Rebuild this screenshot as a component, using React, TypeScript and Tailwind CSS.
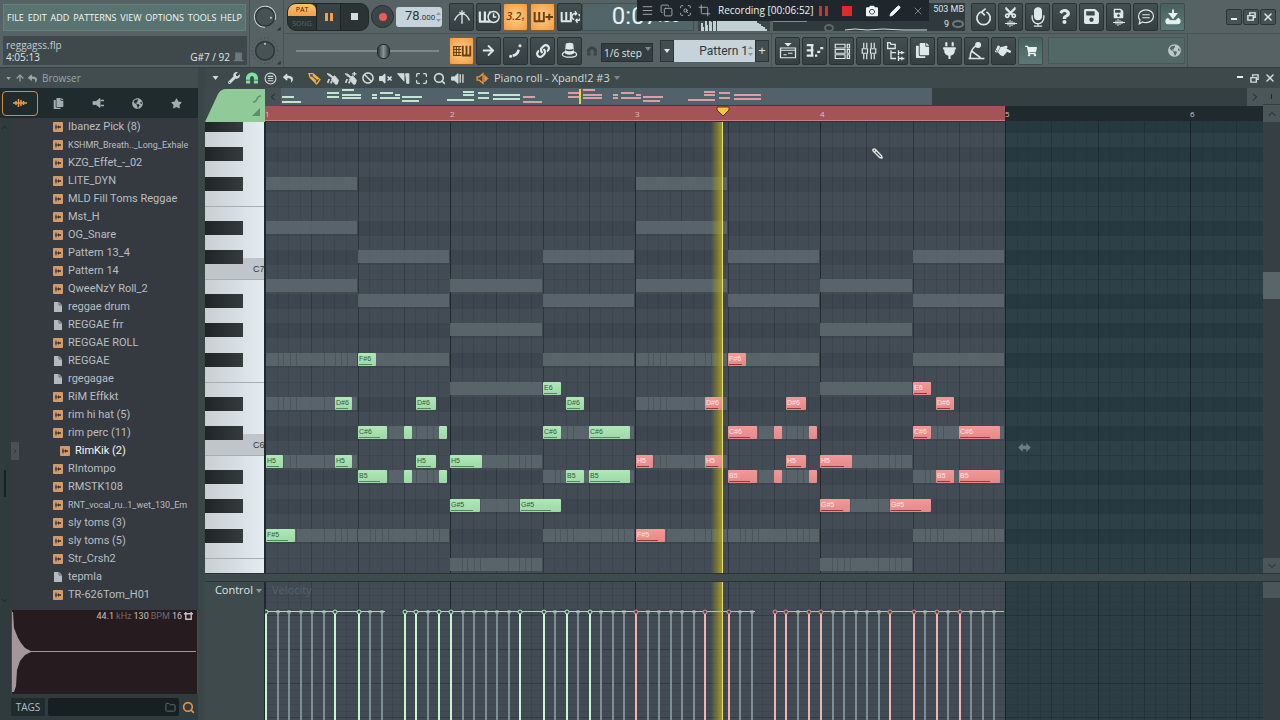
import type { ReactNode } from "react";
import {
  FaArrowRight,
  FaBan,
  FaCamera,
  FaCopy,
  FaCut,
  FaGlobeAmericas,
  FaHandPointRight,
  FaLink,
  FaMagnet,
  FaPlug,
  FaQuestion,
  FaReply,
  FaSave,
  FaShoppingCart,
  FaStar,
  FaVolumeMute,
  FaWrench,
} from "react-icons/fa";
import {
  ArrowUp,
  ChevronDown,
  ChevronLeft,
  ChevronRight,
  ChevronUp,
  Copy,
  Crop,
  Folder,
  Maximize,
  Menu,
  Pencil,
  ScanSearch,
  Search,
  X,
} from "lucide-react";

const BAR = 185;
const STEP = BAR / 16;
const ROW = 44 / 3;
const GRID_TOP = -4;

const rowY = (row: number) => Math.round(GRID_TOP + row * ROW);

// rows are counted down from A#7
const BLACK_ROWS = [0, 2, 4, 7, 9];

type Note = { row: number; x: number; w: number; label?: string };

const PHRASE: Note[] = [
  { row: 16, x: 93, w: 18, label: "F#6" },
  { row: 18, x: 278, w: 18, label: "E6" },
  { row: 19, x: 70, w: 17, label: "D#6" },
  { row: 19, x: 151, w: 20, label: "D#6" },
  { row: 19, x: 301, w: 18, label: "D#6" },
  { row: 21, x: 93, w: 29, label: "C#6" },
  { row: 21, x: 139, w: 8 },
  { row: 21, x: 174, w: 8 },
  { row: 21, x: 278, w: 18, label: "C#6" },
  { row: 21, x: 324, w: 41, label: "C#6" },
  { row: 23, x: 1, w: 17, label: "H5" },
  { row: 23, x: 70, w: 17, label: "H5" },
  { row: 23, x: 151, w: 20, label: "H5" },
  { row: 23, x: 185, w: 32, label: "H5" },
  { row: 24, x: 93, w: 29, label: "B5" },
  { row: 24, x: 139, w: 8 },
  { row: 24, x: 174, w: 8 },
  { row: 24, x: 301, w: 18, label: "B5" },
  { row: 24, x: 324, w: 41, label: "B5" },
  { row: 26, x: 185, w: 30, label: "G#5" },
  { row: 26, x: 255, w: 41, label: "G#5" },
  { row: 28, x: 1, w: 29, label: "F#5" },
];

// ghost notes of the other channels: row, start, end, busy (shows repeated hits)
const GHOSTS: [number, number, number, boolean][] = [
  [4, 1, 93, false],
  [7, 1, 93, false],
  [9, 93, 185, false],
  [9, 278, 370, false],
  [11, 1, 93, false],
  [11, 185, 278, false],
  [12, 93, 185, false],
  [12, 278, 370, false],
  [14, 185, 278, false],
  [16, 1, 93, true],
  [16, 93, 185, false],
  [16, 278, 370, false],
  [18, 185, 278, false],
  [19, 1, 93, true],
  [21, 93, 182, true],
  [21, 278, 370, true],
  [23, 1, 93, true],
  [23, 185, 278, true],
  [24, 93, 182, true],
  [24, 278, 370, true],
  [26, 185, 296, true],
  [28, 1, 93, true],
  [28, 93, 185, true],
  [28, 278, 370, true],
  [30, 185, 278, true],
];

const HITS = [0, 6, 8, 12, 13, 15, 16, 22, 24, 26, 28];
const GHOST_HITS = [1, 2, 3, 4, 5, 9, 10, 14, 17, 18, 19, 20, 21, 25, 27, 29, 30, 31];

const MINI: [number, number, number][] = [
  [1, 13, 8],
  [1, 20, 13],
  [46, 58, 4],
  [46, 58, 8],
  [61, 73, 1],
  [61, 80, 6],
  [61, 80, 9],
  [91, 96, 6],
  [91, 96, 9],
  [99, 112, 4],
  [99, 115, 9],
  [114, 119, 6],
  [114, 119, 9],
  [121, 141, 8],
  [121, 138, 12],
  [166, 193, 11],
  [182, 193, 3],
  [182, 193, 6],
  [197, 208, 4],
  [197, 208, 9],
  [212, 239, 6],
  [212, 239, 10],
];

const FILES: { name: string; kind?: "doc" | "open"; long?: boolean }[] = [
  { name: "Ibanez Pick (8)" },
  { name: "KSHMR_Breath.._Long_Exhale", long: true },
  { name: "KZG_Effet_-_02" },
  { name: "LITE_DYN" },
  { name: "MLD Fill Toms Reggae" },
  { name: "Mst_H" },
  { name: "OG_Snare" },
  { name: "Pattern 13_4" },
  { name: "Pattern 14" },
  { name: "QweeNzY Roll_2" },
  { name: "reggae drum", kind: "doc" },
  { name: "REGGAE frr", kind: "doc" },
  { name: "REGGAE ROLL" },
  { name: "REGGAE", kind: "doc" },
  { name: "rgegagae", kind: "doc" },
  { name: "RiM Effkkt" },
  { name: "rim hi hat (5)" },
  { name: "rim perc (11)" },
  { name: "RimKik (2)", kind: "open" },
  { name: "RIntompo" },
  { name: "RMSTK108" },
  { name: "RNT_vocal_ru..1_wet_130_Em", long: true },
  { name: "sly toms (3)" },
  { name: "sly toms (5)" },
  { name: "Str_Crsh2" },
  { name: "tepmla", kind: "doc" },
  { name: "TR-626Tom_H01" },
];

export default function App() {
  return (
    <div className="flex h-screen flex-col overflow-hidden bg-[#3a4648] font-['Open_Sans','Noto_Sans',sans-serif] text-[#dfe6e6]">
      <Header />
      <div className="flex min-h-0 flex-1 gap-[7px]">
        <Browser />
        <PianoRoll />
      </div>
    </div>
  );
}

function Svg({ children, className = "size-5", box = 24 }: { children: ReactNode; className?: string; box?: number }) {
  return (
    <svg
      viewBox={`0 0 ${box} ${box}`}
      className={`shrink-0 ${className}`}
      fill="none"
      stroke="currentColor"
      strokeWidth="1.6"
      aria-hidden="true">
      {children}
    </svg>
  );
}

function Key({ label, tone = "dark", children }: { label: string; tone?: "dark" | "lit" | "teal"; children: ReactNode }) {
  const tones = {
    dark: "bg-linear-to-b from-[#444f51] to-[#353e40] text-[#dfe8e8] border-[#2a3234]",
    lit: "bg-radial from-[#ffcf88] to-[#f29a3c] text-[#6b3f12] border-[#8a5a26]",
    teal: "bg-linear-to-b from-[#48605e] to-[#5b7a77] text-[#e6f2ef] border-[#3c4f4e]",
  };
  return (
    <button
      type="button"
      aria-label={label}
      className={`flex h-[28px] w-[25px] shrink-0 items-center justify-center rounded-[2px] border ${tones[tone]}`}>
      {children}
    </button>
  );
}

function PianoGlyph() {
  return <path d="M2 6v11M1 17h13M13 6v11M7.500 6v11" strokeWidth="2.400" />;
}

function Knob({ ring }: { ring?: boolean }) {
  return (
    <svg viewBox="0 0 32 34" className="h-[34px] w-[32px]" aria-hidden="true">
      {ring && <path d="M15 27.500A10.500 10.500 0 1 1 25 20" fill="none" stroke="#c9d3d4" strokeWidth="1.500" />}
      {!ring && <circle cx="15" cy="17" r="13" fill="none" stroke="#3c4648" strokeDasharray="1 3" />}
      <circle cx="15" cy="17" r="9.500" fill="#465254" stroke="#2d3638" strokeWidth="1.500" />
      <circle cx={ring ? 21 : 15} cy={ring ? 18 : 10} r="1" fill="#c9d3d4" />
      <path d="M27 31h4v-4z" fill="#2d3638" />
    </svg>
  );
}

function Header() {
  const menu = ["FILE", "EDIT", "ADD", "PATTERNS", "VIEW", "OPTIONS", "TOOLS", "HELP"];
  return (
    <header className="relative flex h-[68px] shrink-0 border-b border-[#333c3e] bg-[#566264]">
      <div className="flex w-[250px] shrink-0 flex-col gap-[5px] border-r border-[#475254] px-[3px] pt-[4px]">
        <nav className="flex h-[27px] w-[243px] items-center justify-between border border-[#66807d] bg-[#587370] px-[3px] text-[9px] text-[#f4f8f7]">
          {menu.map((item) => (
            <a key={item} href={`#${item.toLowerCase()}`}>
              {item}
            </a>
          ))}
        </nav>
        <div className="flex h-[29px] w-[244px] items-center justify-between bg-[#3f494b] px-[3px] text-[10px] leading-[12px]">
          <div>
            <p className="text-[#c3cbcb]">reggagss.flp</p>
            <p>4:05:13</p>
          </div>
          <div className="flex items-end gap-[3px] self-end pb-[2px]">
            <span>G#7 / 92</span>
            <Svg className="h-[13px] w-[11px] text-[#6d797b]" box={16}>
              <path d="M4 13V3h8v10M1 14h14M4 9h8" fill="currentColor" />
            </Svg>
          </div>
        </div>
      </div>
      <div className="flex w-[34px] shrink-0 flex-col border-r border-[#475254]">
        <Knob ring />
        <Knob />
      </div>
      <div className="flex min-w-0 flex-1 flex-col">
        <div className="flex h-[34px] items-center border-b border-[#475254] pl-[3px]">
          <Transport />
          <div className="flex w-[140px] shrink-0 gap-[2px] pl-[7px]">
            <Key label="Metronome">
              <Svg>
                <path d="M3 16C6 10 9 8 12 8s6 2 9 8M12 4v16M9 6l3 3 3-3" />
              </Svg>
            </Key>
            <Key label="Wait for input">
              <Svg className="size-[22px]">
                <PianoGlyph />
                <circle cx="17" cy="12" r="6" className="fill-[#3c4648]" />
                <path d="M17 8v4h3" />
              </Svg>
            </Key>
            <Key label="Countdown" tone="lit">
              <span className="text-[11px] font-semibold italic">
                3.2<span className="text-[9px]">₁</span>
              </span>
            </Key>
            <Key label="Overdub" tone="lit">
              <Svg>
                <PianoGlyph />
                <path d="M15 12h9M19.500 8v8" strokeWidth="2.400" />
              </Svg>
            </Key>
            <Key label="Loop recording">
              <Svg>
                <PianoGlyph />
                <path d="M22 9a3.500 3.500 0 0 1-2 7M17 15a3.500 3.500 0 0 1 2-7M18 5l2 3-2 2M21 19l-2-3 2-2" />
              </Svg>
            </Key>
          </div>
          <div className="flex h-[28px] w-[112px] shrink-0 items-start justify-end overflow-hidden border border-[#42504f] bg-[#52666a] pr-[13px] font-['Roboto'] text-[24px] leading-[24px] text-[#e8f3f1]">
            0:07<span className="self-center text-[16px]">:00</span>
          </div>
          <div className="ml-[4px] flex h-[28px] w-[72px] shrink-0 items-end bg-[#3a4648]">
            <Spectrum />
          </div>
          <div className="ml-[3px] flex h-[28px] w-[192px] shrink-0 bg-[#303a3c] pr-px">
            <svg className="h-full min-w-0 flex-1" aria-hidden="true">
              <path d="M0 18h34M72 27l10-1 12 1 16-1 20 1h24" stroke="#d6e0e0" fill="none" />
              <ellipse cx="56" cy="25" rx="4" ry="3" fill="none" stroke="#59686a" strokeWidth="2" />
            </svg>
            <div className="flex w-[32px] shrink-0 flex-col justify-between text-right font-['Roboto'] text-[9px] leading-[13px]">
              <p className="whitespace-nowrap">503 MB</p>
              <p className="flex items-center justify-end gap-[3px]">
                9
                <svg className="h-[8px] w-[12px]" aria-hidden="true">
                  <ellipse cx="6" cy="4" rx="5" ry="3" fill="none" stroke="#6d797b" strokeWidth="2" />
                </svg>
              </p>
            </div>
          </div>
          <div className="flex gap-[2px] pl-[6px]">
            <Key label="Undo">
              <Svg>
                <path d="M8 6a8 8 0 1 0 7 0M14 2L9 6l4 4" strokeWidth="2" />
              </Svg>
            </Key>
            <Key label="Cut">
              <span className="flex flex-col items-center gap-px">
                <FaCut className="size-[13px] -rotate-90" />
                <MiniWave />
              </span>
            </Key>
            <Key label="Record audio">
              <Svg>
                <rect x="8" y="1" width="8" height="14" rx="4" fill="currentColor" />
                <path d="M5 10v3a7 7 0 0 0 14 0v-3M12 20v3M7 23h10" />
              </Svg>
            </Key>
            <Key label="Help">
              <FaQuestion className="size-[15px]" />
            </Key>
            <Key label="Save">
              <FaSave className="size-[17px]" />
            </Key>
            <Key label="Save as wave">
              <span className="flex flex-col items-center">
                <FaSave className="size-[11px]" />
                <MiniWave />
              </span>
            </Key>
            <Key label="Comments">
              <Svg className="size-[18px]">
                <path d="M12 2.500c6 0 10 4 10 8.500s-4 8.500-10 8.500c-2 0-3 0-4.500-1L3 21l1-5c-1.500-1.500-2-3-2-5 0-4.500 4-8.500 10-8.500zM7 9h10M7 13h10" />
              </Svg>
            </Key>
            <Key label="Download" tone="teal">
              <Svg className="size-[18px]">
                <path d="M12 2v9M8 8l4 5 4-5z" fill="currentColor" strokeWidth="2.500" />
                <path d="M5 14c-4 2-3 7 1 7h12c4 0 5-5 1-7l-3 3H8z" fill="currentColor" />
              </Svg>
            </Key>
          </div>
          <div className="ml-auto flex gap-[1px] pr-[4px]">
            <WindowButtons boxed />
          </div>
        </div>
        <div className="flex h-[33px] items-center">
          <input
            type="range"
            aria-label="Song position"
            defaultValue={62}
            className="ml-[12px] h-[16px] w-[143px] shrink-0 appearance-none bg-transparent [&::-webkit-slider-runnable-track]:h-[2px] [&::-webkit-slider-runnable-track]:bg-[#7c888a] [&::-webkit-slider-thumb]:-mt-[6px] [&::-webkit-slider-thumb]:h-[15px] [&::-webkit-slider-thumb]:w-[13px] [&::-webkit-slider-thumb]:appearance-none [&::-webkit-slider-thumb]:rounded-[6px] [&::-webkit-slider-thumb]:border [&::-webkit-slider-thumb]:border-[#20282a] [&::-webkit-slider-thumb]:bg-linear-to-r [&::-webkit-slider-thumb]:from-[#333b3d] [&::-webkit-slider-thumb]:via-[#8a9496] [&::-webkit-slider-thumb]:to-[#333b3d]"
          />
          <div className="flex w-[141px] shrink-0 gap-[2px] pl-[10px]">
            <Key label="Typing keyboard" tone="lit">
              <Svg className="h-[18px] w-[20px]">
                <path d="M0 6h11M0 10h11M0 14h11M0 18h11M1 6v12M4.500 6v12M8 6v12" strokeWidth="1.500" />
                <path d="M13 5v14M12 18h12M23 5v14M18 5v14" strokeWidth="2.500" />
              </Svg>
            </Key>
            <Key label="Step edit">
              <FaArrowRight className="size-[13px]" />
            </Key>
            <Key label="Glide">
              <Svg className="size-[16px]">
                <path d="M7 19c6-1 8-4 9-9" strokeWidth="4" />
                <circle cx="4" cy="20" r="1.500" fill="currentColor" />
                <circle cx="18" cy="4" r="1.500" fill="currentColor" />
              </Svg>
            </Key>
            <Key label="Link">
              <FaLink className="size-[14px]" />
            </Key>
            <Key label="Multilink">
              <Svg className="size-[19px]">
                <path d="M7 15l1-11q4-2 8 0l1 11q-5 3-10 0z" fill="currentColor" />
                <ellipse cx="12" cy="17" rx="9" ry="3.500" />
                <path d="M7 11q5 2 10 0" stroke="#384244" />
              </Svg>
            </Key>
          </div>
          <FaMagnet className="ml-[7px] size-[10px] shrink-0 rotate-180 text-[#3a4446]" />
          <div className="relative ml-[4px] shrink-0">
            <select
              aria-label="Snap"
              className="h-[19px] w-[52px] appearance-none border border-[#282f31] bg-[#343d3f] pl-[2px] text-[10px] leading-[12px]">
              <option>1/6 step</option>
            </select>
            <Caret className="absolute top-[8px] right-[2px] h-[4px] w-[6px] text-[#7c888a]" />
          </div>
          <div className="ml-[7px] flex h-[22px] w-[109px] shrink-0 items-stretch">
            <button
              type="button"
              aria-label="Pick pattern"
              className="flex w-[14px] shrink-0 items-center justify-center border border-[#2c3436] bg-[#424d4f]">
              <Caret className="h-[4px] w-[6px]" />
            </button>
            <label className="flex min-w-0 flex-1 items-center bg-[#c6d3da] pr-[2px] text-[#8d9aa0]">
              <input
                aria-label="Pattern name"
                defaultValue="Pattern 1"
                className="min-w-0 flex-1 bg-transparent text-right font-['Roboto'] text-[12px] text-[#2e373b]"
              />
              <Spinner />
            </label>
            <button
              type="button"
              aria-label="Add pattern"
              className="flex w-[14px] shrink-0 items-center justify-center border border-[#2c3436] bg-[#424d4f] text-[13px] leading-none">
              +
            </button>
          </div>
          <div className="ml-[2px] h-full w-px bg-[#475254]" />
          <div className="flex gap-[2px] pl-[3px]">
            <Key label="Playlist">
              <Svg className="size-[18px]">
                <path d="M2 8h20v13H2zM2 11h20M6 17h4M12 15h6" />
                <path d="M9 2h6l-3 3z" fill="currentColor" />
              </Svg>
            </Key>
            <Key label="Piano roll">
              <Svg className="size-[18px]">
                <path d="M1 4h9M1 11h9M1 18h9M8 3v16" strokeWidth="3" />
                <path d="M12 18h3M15 13h4M19 8h4" strokeWidth="3" />
              </Svg>
            </Key>
            <Key label="Channel rack">
              <Svg className="size-[18px]">
                <path d="M3 3h13v5H3zM3 10h13v5H3zM3 17h13v5H3zM19 3h3v5h-3zM19 10h3v5h-3zM19 17h3v5h-3z" />
              </Svg>
            </Key>
            <Key label="Mixer">
              <Svg className="size-[18px]">
                <path d="M5 1v7M9 1v7M5 16v7M9 16v7M15 1v7M19 1v7M15 16v7M19 16v7M3 9h7v6H3zM14 9h7v6h-7z" />
              </Svg>
            </Key>
            <Key label="Browser">
              <Svg className="size-[20px]">
                <path d="M2 2h3l1 2h5v5H2zM6 11v10h6M6 14h6M15 11v6M15 14h7M15 18v6M15 21h7M19 12v4M19 19v4" />
              </Svg>
            </Key>
            <Key label="Project files">
              <FaCopy className="size-[15px]" />
            </Key>
            <Key label="Plugins">
              <FaPlug className="size-[17px]" />
            </Key>
            <Key label="Tempo tapper">
              <Svg className="size-[19px]">
                <path d="M4 21c0-6 1-10 7-15M5 12l12 9M2 22h20" strokeWidth="2" />
                <circle cx="14" cy="5" r="3" fill="currentColor" />
              </Svg>
            </Key>
            <Key label="Touch">
              <FaHandPointRight className="size-[15px] rotate-[25deg]" />
            </Key>
            <Key label="Shop" tone="teal">
              <FaShoppingCart className="size-[12px]" />
            </Key>
          </div>
          <div className="ml-[5px] flex h-[27px] w-[137px] shrink-0 items-center justify-end border border-[#465857] bg-[#526866] pr-[3px]">
            <FaGlobeAmericas className="size-[13px] text-[#bdc9c8]" />
          </div>
          <div className="ml-[2px] h-full w-px bg-[#475254]" />
        </div>
      </div>
      <RecorderBar />
    </header>
  );
}

function Transport() {
  return (
    <>
      <div className="flex h-[28px] w-[82px] shrink-0 overflow-hidden rounded-[9px] border border-[#20282a] bg-[#2b3335]">
        <button type="button" className="flex w-[28px] flex-col text-[7px] leading-[12px]">
          <span className="w-full rounded-t-[6px] bg-linear-to-b from-[#ffc06a] to-[#f0a04a] text-[#3b2410]">PAT</span>
          <span className="w-full pt-[2px] text-[#5b6567]">SONG</span>
        </button>
        <button
          type="button"
          aria-label="Pause"
          className="flex w-[25px] items-center justify-center gap-[2px] border-x border-[#1c2325] bg-[#384143]">
          <i className="h-[8px] w-[3px] bg-[#f2a24c]" />
          <i className="h-[8px] w-[3px] bg-[#f2a24c]" />
        </button>
        <button type="button" aria-label="Stop" className="flex flex-1 items-center justify-center">
          <i className="size-[7px] bg-[#d5dcdc]" />
        </button>
      </div>
      <button
        type="button"
        aria-label="Record"
        className="ml-[2px] flex size-[23px] shrink-0 items-center justify-center rounded-full border border-[#272f31] bg-[#3c4648]">
        <i className="size-[8px] rounded-full bg-[#ee5a56]" />
      </button>
      <div className="ml-[2px] flex h-[20px] w-[46px] shrink-0 items-center justify-between rounded-[3px] bg-[#c6d3da] pr-px pl-[9px] text-[#8d9aa0]">
        <span className="font-['Roboto'] text-[13px] leading-[20px] text-[#2e373b]">
          78<span className="text-[8px]">.000</span>
        </span>
        <Spinner />
      </div>
    </>
  );
}

function Spinner() {
  return (
    <svg viewBox="0 0 5 10" className="h-[10px] w-[5px] shrink-0" aria-hidden="true">
      <path d="M0 3h5L2.500 0zM0 7h5l-2.500 3z" fill="currentColor" />
    </svg>
  );
}

function RecorderBar() {
  return (
    <div className="absolute top-0 left-[637px] flex h-[21px] w-[292px] items-center bg-[#1f272c] text-[#eef2f2]">
      <div className="flex w-[75px] items-center gap-[6px] pl-[4px] text-[#b8c2c4]">
        <Menu className="size-[13px]" strokeWidth={1.5} />
        <Copy className="size-[13px]" strokeWidth={1.5} />
        <ScanSearch className="size-[13px]" strokeWidth={1.5} />
        <Crop className="size-[13px]" strokeWidth={1.5} />
      </div>
      <span className="w-[103px] pl-[6px] text-[10px] whitespace-nowrap">Recording [00:06:52]</span>
      <span className="ml-[4px] flex gap-[3px]">
        <i className="h-[10px] w-[3px] bg-[#c93434]" />
        <i className="h-[10px] w-[3px] bg-[#c93434]" />
      </span>
      <i className="ml-[14px] size-[10px] bg-[#e02a2a]" />
      <FaCamera className="ml-[14px] size-[12px]" />
      <Pencil className="ml-[11px] size-[12px]" fill="currentColor" />
      <X className="ml-[11px] size-[12px] text-[#9aa5a8]" strokeWidth={1.5} />
    </div>
  );
}

function Caret({ className }: { className: string }) {
  return (
    <svg viewBox="0 0 6 4" className={`shrink-0 ${className}`} aria-hidden="true">
      <path d="M0 0h6L3 4z" fill="currentColor" />
    </svg>
  );
}

function MiniWave() {
  return (
    <svg viewBox="0 0 12 7" className="h-[7px] w-[12px]" stroke="currentColor" aria-hidden="true">
      <path d="M0 3.500h12M3 1.500v4M5 0v7M7 1v5M9 2v3" />
    </svg>
  );
}

function Spectrum() {
  const bars = [8, 4, 12, 6, 14, 9, 16, 18, 12, 17, 16, 18, 17, 18, 16, 18, 17, 18, 18, 17, 18, 17, 16, 17, 14, 13, 12, 10, 8, 7, 5, 4, 2];
  return (
    <svg className="h-[20px] w-full" viewBox="0 0 72 20" preserveAspectRatio="none" aria-hidden="true">
      {bars.map((h, i) => (
        <rect key={i} x={i * 2 + 3} y={20 - h} width={i < 8 && i % 2 ? 1 : 2} height={h} fill="#c3d0d3" />
      ))}
    </svg>
  );
}

function WindowButtons({ boxed }: { boxed?: boolean }) {
  const cls = boxed
    ? "flex h-[16px] w-[16px] items-center justify-center rounded-[2px] border border-[#2c3436] bg-[#475254]"
    : "flex h-[16px] w-[15px] items-center justify-center";
  return (
    <>
      <button type="button" aria-label="Minimize" className={cls}>
        <i className={boxed ? "mt-[5px] h-[2px] w-[6px] bg-[#e6ecec]" : "mb-[3px] h-[2px] w-[6px] bg-[#e6ecec]"} />
      </button>
      <button type="button" aria-label="Restore" className={cls}>
        <Svg className="size-[9px]" box={10}>
          <path d="M3 3V1h6v5H7M1 4h6v5H1z" />
        </Svg>
      </button>
      <button type="button" aria-label="Close" className={cls}>
        <X className="size-[12px]" strokeWidth={3} />
      </button>
    </>
  );
}

function Browser() {
  return (
    <aside className="flex w-[198px] shrink-0 flex-col bg-[#2f3b3d]">
      <div className="flex h-[20px] shrink-0 items-center gap-[3px] bg-[#424d4f] pl-[6px] text-[10px] text-[#9ba5a6]">
        <Caret className="h-[3px] w-[5px]" />
        <ArrowUp className="ml-px size-[10px]" strokeWidth={3} />
        <FaReply className="size-[9px]" />
        <span className="ml-[2px]">Browser</span>
      </div>
      <div className="flex h-[30px] shrink-0 items-center bg-[#202b2e] text-[#a3acae]">
        <button
          type="button"
          aria-label="Sounds"
          className="ml-[2px] flex h-[25px] w-[36px] items-center justify-center rounded-[4px] border border-[#d48c43] text-[#ee9a46]">
          <svg viewBox="0 0 14 10" className="h-[10px] w-[14px]" stroke="currentColor" strokeWidth="1.500" aria-hidden="true">
            <path d="M0 5h14M3 3v4M5.500 1v8M8 2v6M10.500 3v4" />
          </svg>
        </button>
        <button type="button" aria-label="Files" className="flex w-[40px] justify-center">
          <FaCopy className="size-[11px]" />
        </button>
        <button type="button" aria-label="Plugins" className="flex w-[40px] justify-center">
          <Svg className="h-[12px] w-[13px]">
            <path d="M1 9h6l8-6v18l-8-6H1z" fill="currentColor" />
            <path d="M16 7h7M16 17h7" strokeWidth="3" />
          </Svg>
        </button>
        <button type="button" aria-label="Online" className="flex w-[39px] justify-center">
          <FaGlobeAmericas className="size-[11px]" />
        </button>
        <button type="button" aria-label="Favorites" className="flex w-[39px] justify-center">
          <FaStar className="size-[11px]" />
        </button>
      </div>
      <div className="flex min-h-0 flex-1">
        <div className="flex w-[11px] shrink-0 flex-col justify-between py-[5px] text-[#172022]">
          <ChevronUp className="size-[9px]" />
          <i className="mt-[238px] ml-[4px] h-[27px] w-[2px] bg-[#172022]" />
          <ChevronDown className="size-[9px]" />
        </div>
        <div className="flex w-[8px] shrink-0 items-start bg-[#343a40] pt-[324px]">
          <span className="flex h-[18px] w-[8px] items-center bg-[#4a5055] text-[#22282c]">
            <ChevronRight className="size-[8px]" />
          </span>
        </div>
        <ul className="min-w-0 flex-1 overflow-hidden bg-[#343a40] font-['Roboto'] text-[11px] leading-[18px] whitespace-nowrap text-[#b9bec2]">
          {FILES.map((file) => (
            <li key={file.name} className={file.kind === "open" ? "pl-[41px] text-[#f4f7f8]" : "pl-[34px]"}>
              <button type="button" className="flex h-[18px] items-center gap-[5px]">
                {file.kind === "doc" ? <DocIcon /> : <SampleIcon />}
                <span className={file.long ? "text-[9px]" : undefined}>{file.name}</span>
              </button>
            </li>
          ))}
        </ul>
      </div>
      <div className="ml-[11px] flex h-[84px] shrink-0 flex-col border-x border-[#8e2b2b] bg-[#261c20]">
        <p className="flex h-[14px] items-center justify-end gap-[2px] pr-[4px] font-['Roboto'] text-[9px] text-[#c6c0c2]">
          44.1<span className="text-[#746a6d]">kHz</span>130<span className="text-[#746a6d]">BPM</span>16
          <Svg className="size-[9px]" box={10}>
            <path d="M2 2h6v6H2zM0 2h2V0M10 2H8V0" />
          </Svg>
        </p>
        <div className="relative flex-1">
          <svg className="h-full w-full overflow-visible" aria-hidden="true">
            <path d="M0 -12H1L2 4 4 9 6 14 9 19 13 24 19 27H184V28H19L13 31 8 37 5 46 4 62 2 68H0z" fill="#a3979b" />
          </svg>
          <button
            type="button"
            aria-label="Preview"
            className="absolute bottom-[2px] left-[3px] flex h-[10px] w-[18px] items-center justify-center rounded-[3px] bg-[#ea9440]">
            <svg viewBox="0 0 4 6" className="h-[6px] w-[4px]" aria-hidden="true">
              <path d="M0 0l4 3-4 3z" fill="#2a1c10" />
            </svg>
          </button>
        </div>
      </div>
      <div className="flex h-[26px] shrink-0 items-center gap-[3px] pl-[11px]">
        <button type="button" className="h-[18px] w-[34px] bg-[#202b2e] text-[10px] text-[#b4bcbd]">
          TAGS
        </button>
        <label className="flex h-[18px] w-[131px] items-center rounded-[2px] bg-[#162022] pr-[3px]">
          <input aria-label="Search browser" className="min-w-0 flex-1 bg-transparent" />
          <Folder className="size-[11px] text-[#667072]" />
        </label>
        <Search className="size-[13px] text-[#ea9440]" strokeWidth={3} />
      </div>
    </aside>
  );
}

function SampleIcon() {
  return (
    <svg viewBox="0 0 10 10" className="size-[10px] shrink-0" aria-hidden="true">
      <rect width="10" height="10" rx="1" fill="#d39a6c" />
      <path d="M2 5h6M3 2.500v5M5.500 3.500v3M7 4v2" stroke="#3d2c22" />
    </svg>
  );
}

function DocIcon() {
  return (
    <svg viewBox="0 0 10 12" className="h-[12px] w-[10px] shrink-0" aria-hidden="true">
      <path d="M1 1h5l3 3v7H1z" fill="#b5b8bf" />
      <path d="M6 1v3h3" stroke="#60656b" fill="none" />
    </svg>
  );
}

function BrushIcon({ plus }: { plus?: boolean }) {
  return (
    <Svg className="size-[13px]">
      <path d="M2 3l5 1 6 5 3-2 7 8-2 7-3 1-8-9 2-3-6-4z" fill="currentColor" />
      <path d="M6 13l-3 7M11 16l-2 5" strokeWidth="3" />
      {plus && <path d="M19 0v7M15 3.500h8" strokeWidth="2.500" />}
    </Svg>
  );
}

function PianoRoll() {
  return (
    <main className="flex min-w-0 flex-1 flex-col bg-[#3e4a4b]">
      <div className="flex h-[20px] shrink-0 items-center gap-[6px] bg-[#3e494b] pl-[7px] text-[#d3dada]">
        <Caret className="h-[4px] w-[7px]" />
        <FaWrench className="ml-[3px] size-[12px]" />
        <FaMagnet className="size-[12px] rotate-180 text-[#7fe3a0]" />
        <Svg className="size-[13px]">
          <circle cx="12" cy="12" r="10" strokeWidth="2" />
          <path d="M7 8h10M7 12h10M7 16h10" strokeWidth="2" />
        </Svg>
        <FaReply className="size-[10px]" />
        <span className="ml-[9px] flex items-center gap-[5px]">
          <Svg className="size-[13px] text-[#f0b343]">
            <path d="M2 3h7l13 11-6 8L4 10zM6 9l9 8M9 6l9 8" strokeWidth="2.500" />
          </Svg>
          <BrushIcon />
          <BrushIcon plus />
          <FaBan className="size-[12px]" />
          <FaVolumeMute className="size-[13px]" />
          <Svg className="size-[13px]">
            <path d="M1 3h12v14zM16 3h6v18h-4z" fill="currentColor" />
          </Svg>
          <Maximize className="size-[13px]" strokeWidth={2.5} />
          <Search className="size-[13px]" strokeWidth={3} />
          <Svg className="size-[13px]">
            <path d="M1 9h5l7-6v18l-7-6H1z" fill="currentColor" />
            <path d="M17 4v16M22 4v16" strokeWidth="2.500" />
          </Svg>
        </span>
        <Svg className="ml-[6px] size-[13px] text-[#ea9440]">
          <path d="M2 9h4l7-6v18l-7-6H2z" strokeWidth="2.500" />
          <path d="M16 6l6 6-6 6z" fill="currentColor" />
        </Svg>
        <h1 className="-ml-px flex items-center gap-[4px] text-[11px]">
          Piano roll - Xpand!2 #3
          <Caret className="h-[4px] w-[6px] text-[#7c888a]" />
        </h1>
        <div className="ml-auto flex pr-[3px]">
          <WindowButtons />
        </div>
      </div>
      <Timeline />
      <div className="flex min-h-0 flex-1">
        <Keyboard />
        <NoteGrid />
        <div className="flex w-[17px] shrink-0 flex-col items-center justify-between bg-[#363f41] text-[#20282a]">
          <i className="mt-[150px] h-[27px] w-full bg-[#5a6567]" />
          <span className="flex h-[15px] w-full items-center justify-center bg-[#4b5658]">
            <ChevronDown className="size-[12px]" />
          </span>
        </div>
      </div>
      <div className="h-[9px] shrink-0 border-y border-[#2a3335] bg-[#3e4a4b]" />
      <div className="flex h-[138px] shrink-0">
        <div className="flex w-[60px] shrink-0 items-start justify-end gap-[3px] border-r border-[#20282b] pt-[1px] pr-[2px] text-[11px] leading-[14px] font-medium">
          <span>Control</span>
          <Caret className="mt-[6px] h-[4px] w-[6px] text-[#8b9698]" />
        </div>
        <Velocity />
        <div className="w-[17px] shrink-0 bg-[#343d3f]">
          <div className="h-[16px] bg-[#4b5658]" />
        </div>
      </div>
    </main>
  );
}

function Timeline() {
  return (
    <div className="flex h-[34px] shrink-0">
      <svg className="h-[34px] w-[60px] shrink-0" aria-hidden="true">
        <path d="M0 34L13 6q3-5 8-5H60V34z" fill="#8fca98" />
        <path d="M48 14c6 0 2-6 8-6" fill="none" stroke="#5c8f68" strokeWidth="1.500" />
        <path d="M47 28h8v-8z" fill="#5c8f68" />
      </svg>
      <div className="flex min-w-0 flex-1 flex-col">
        <div className="flex h-[18px] shrink-0 bg-[#343f41]">
          <div className="flex w-[16px] shrink-0 items-center justify-center bg-[#465255] text-[#1d2527]">
            <ChevronLeft className="size-[12px]" />
          </div>
          <svg className="h-[17px] w-[651px] bg-[#51626a]" aria-hidden="true">
            {[0, 241].map((dx) =>
              MINI.map(([from, to, y]) => (
                <rect
                  key={`${dx}-${from}-${y}`}
                  x={from + dx}
                  y={y}
                  width={to - from}
                  height="2"
                  fill={dx || y + from > 300 ? "#d99fa4" : "#c3e6d1"}
                />
              )),
            )}
            <rect x="298" y="1" width="2" height="15" fill="#e2d24a" />
          </svg>
          <div className="ml-auto flex w-[16px] items-center justify-center bg-[#4b5658] text-[#1d2527]">
            <ChevronRight className="size-[12px]" />
          </div>
        </div>
        <div className="relative h-[16px] overflow-hidden border-b border-[#2a3335] bg-[#1e2a2e]">
          <div className="h-[15px] w-[740px] border-b border-[#c98083] bg-[#a35457]" />
          <ol className="absolute inset-0 text-[8px] leading-[16px] text-[#d9c4c5]">
            {[1, 2, 3, 4, 5, 6].map((bar) => (
              <li key={bar} className="absolute" style={{ left: (bar - 1) * BAR }}>
                {bar}
              </li>
            ))}
          </ol>
          <svg className="absolute top-0 left-[451px] h-[12px] w-[14px]" aria-hidden="true">
            <path d="M1 1h12v3L7 10 1 4z" fill="#f4c545" stroke="#4e3b14" />
          </svg>
        </div>
      </div>
      <div className="flex w-[17px] shrink-0 flex-col gap-px bg-[#343f41] text-[#1d2527]">
        <span className="flex h-[16px] items-center justify-center bg-[#4b5658]">
          <i className="h-[5px] w-px bg-current" />
        </span>
        <span className="flex flex-1 items-center justify-center bg-[#4b5658]">
          <ChevronUp className="size-[12px]" />
        </span>
      </div>
    </div>
  );
}

function Keyboard() {
  const octaves = [0, 12, 24];
  return (
    <svg className="h-full w-[60px] shrink-0" aria-hidden="true">
      <defs>
        <linearGradient id="ivory">
          <stop offset="0" stopColor="#c8ced2" />
          <stop offset="1" stopColor="#e6edf2" />
        </linearGradient>
        <linearGradient id="ebony">
          <stop offset="0" stopColor="#1f2426" />
          <stop offset="1" stopColor="#363c3e" />
        </linearGradient>
      </defs>
      <rect width="60" height="100%" fill="url(#ivory)" />
      {octaves.map((o) => (
        <g key={o}>
          {o < 24 && <rect y={rowY(o + 10) - 7} width="59" height="22" fill="#bfc5c9" />}
          <path d={`M0 ${rowY(o + 6)}.5H60M0 ${rowY(o + 11)}.5H60`} stroke="#a7adb1" />
          {BLACK_ROWS.map((row) => (
            <rect key={row} y={rowY(o + row)} width="38" height="14" fill="url(#ebony)" />
          ))}
          {o < 24 && (
            <text x="48" y={rowY(o + 10) + 7} className="fill-[#33393c] font-['Liberation_Sans'] text-[9px]">
              {o ? "C6" : "C7"}
            </text>
          )}
        </g>
      ))}
      <path d="M59.500 0V1200" stroke="#20282b" />
    </svg>
  );
}

function GridLines() {
  const steps = Array.from({ length: 16 * 14 }, (_, i) => i);
  return (
    <>
      {steps.map((i) => (
        <rect
          key={i}
          x={Math.round(i * STEP)}
          width="1"
          height="100%"
          fill="#0c1418"
          opacity={i % 16 === 0 ? 0.6 : i % 8 === 0 ? 0.38 : i % 4 === 0 ? 0.26 : 0.1}
        />
      ))}
    </>
  );
}

function RowPattern({ id, light, dark }: { id: string; light: string; dark: string }) {
  return (
    <pattern id={id} y={GRID_TOP} width="20" height="176" patternUnits="userSpaceOnUse">
      <rect width="20" height="176" fill={light} />
      {BLACK_ROWS.map((row) => (
        <rect key={row} y={Math.round(row * ROW)} width="20" height="15" fill={dark} />
      ))}
      <path d="M0 88.500H20M0 161.500H20" stroke={dark} />
    </pattern>
  );
}

function NoteGrid() {
  return (
    <div className="relative min-w-0 flex-1 overflow-hidden font-['Liberation_Sans'] text-[7px] leading-[8px]">
      <svg className="h-full w-full" aria-hidden="true">
        <defs>
          <RowPattern id="rows" light="#434c54" dark="#3d464e" />
          <RowPattern id="rows-empty" light="#2d4047" dark="#273940" />
        </defs>
        <rect width="100%" height="100%" fill="url(#rows-empty)" />
        <rect width="740" height="100%" fill="url(#rows)" />
        <GridLines />
        {[0, 370].map((dx) =>
          GHOSTS.map(([row, from, to, busy]) => (
            <g key={`${dx}-${row}-${from}`}>
              <rect x={from + dx} y={rowY(row)} width={to - from - 1} height="13" fill="#5b676d" opacity="0.9" />
              {busy &&
                [12, 17, 24, 30, 58, 69, 75, 81].map((t) => (
                  <rect key={t} x={from + dx + t} y={rowY(row)} width="1" height="13" fill="#4b565c" />
                ))}
            </g>
          )),
        )}
        <Playhead />
      </svg>
      {[0, 370].map((dx) =>
        PHRASE.map((note) => (
          <div
            key={`${dx}-${note.row}-${note.x}`}
            className={
              dx
                ? "absolute flex h-[13px] flex-col justify-between overflow-hidden rounded-[1px] bg-linear-to-b from-[#f19a99] to-[#e58888] pt-[2px] pb-px pl-px text-[#ffe9e7]"
                : "absolute flex h-[13px] flex-col justify-between overflow-hidden rounded-[1px] bg-linear-to-b from-[#b0e8b8] to-[#9dd8a6] pt-[2px] pb-px pl-px text-[#2f5a3c]"
            }
            style={{ left: note.x + dx, top: rowY(note.row), width: note.w }}>
            {note.label && (
              <>
                <span>{note.label}</span>
                <i className={dx ? "h-px w-3/4 shrink-0 bg-[#8f3a40]" : "h-px w-3/4 shrink-0 bg-[#4f8a5e]"} />
              </>
            )}
          </div>
        )),
      )}
      <Pencil className="absolute top-[26px] left-[607px] size-[11px] -scale-x-100 text-[#e6ebeb]" strokeWidth={3} />
      <svg viewBox="0 0 14 10" className="absolute top-[321px] left-[753px] h-[9px] w-[13px]" aria-hidden="true">
        <path d="M0 5l5-5v3h4V0l5 5-5 5V7H5v3z" fill="#6d7d83" />
      </svg>
    </div>
  );
}

function Playhead() {
  return (
    <>
      <linearGradient id="glow">
        <stop offset="0" stopColor="#b5a51e" stopOpacity="0" />
        <stop offset="1" stopColor="#b5a51e" stopOpacity="0.85" />
      </linearGradient>
      <rect x="446" width="11" height="100%" fill="url(#glow)" />
      <rect x="457" width="1" height="100%" fill="#e8de74" />
    </>
  );
}

function Velocity() {
  return (
    <div className="relative min-w-0 flex-1 overflow-hidden bg-[#2c3d44]">
      <svg className="h-full w-full" aria-hidden="true">
        <defs>
          <pattern id="levels" width="20" height="34" y="-1" patternUnits="userSpaceOnUse">
            <path d="M0 .5H20" stroke="#0c1418" opacity="0.300" />
            <path d="M0 7.500H20M0 14.500H20M0 21.500H20M0 28.500H20" stroke="#0c1418" opacity="0.100" />
          </pattern>
        </defs>
        <rect width="740" height="100%" fill="#424b53" />
        <rect width="100%" height="100%" fill="url(#levels)" />
        <GridLines />
        <Playhead />
        {[0, 32].map((ds) => (
          <g key={ds} fill="none">
            {GHOST_HITS.map((s) => {
              const x = Math.round((s + ds) * STEP);
              return (
                <g key={s}>
                  <rect x={x} y="30" width="2" height="200" fill="#7d8d93" />
                  <circle cx={x + 1} cy="30" r="2" fill="#8fa0a6" />
                </g>
              );
            })}
            <path
              d={`M${Math.round(ds * STEP)} 29.500h120M${Math.round((ds + 12) * STEP)} 29.500h230`}
              stroke={ds ? "#d9aeb0" : "#b4d3c3"}
            />
            {HITS.map((s) => {
              const x = Math.round((s + ds) * STEP);
              return (
                <g key={s}>
                  <rect x={x} y="31" width="2" height="200" fill={ds ? "#f2b3b0" : "#c9f4d0"} />
                  <circle cx={x + 1} cy="30" r="2" fill="#424b53" stroke={ds ? "#ee8a88" : "#b5efc0"} />
                </g>
              );
            })}
          </g>
        ))}
      </svg>
      <span className="absolute top-[1px] left-[7px] text-[11px] leading-[14px] text-[#566068]">Velocity</span>
    </div>
  );
}
